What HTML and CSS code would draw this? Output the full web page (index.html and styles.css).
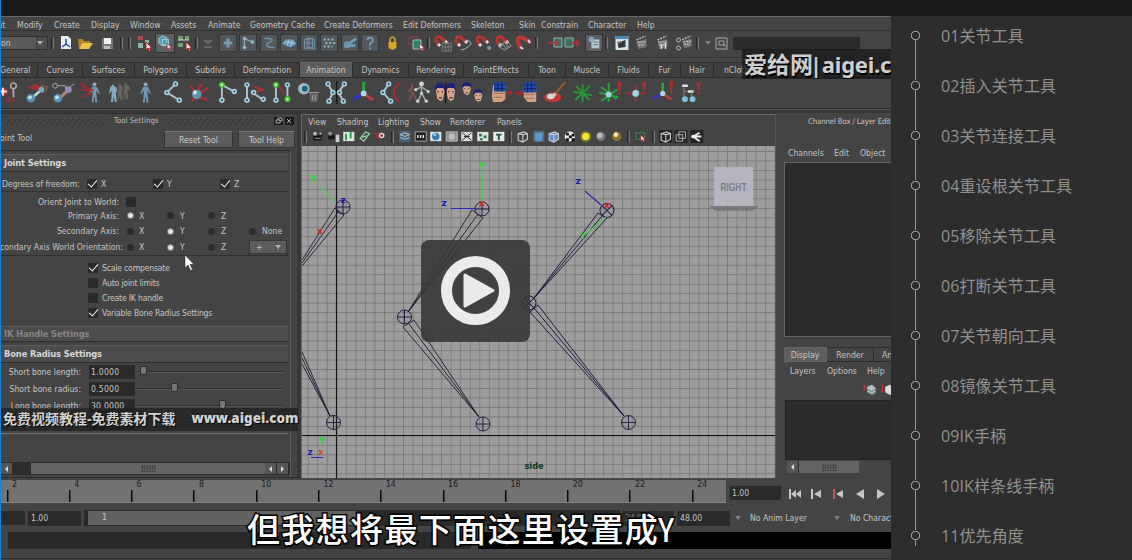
FILE: index.html
```html
<!DOCTYPE html>
<html lang="zh">
<head>
<meta charset="utf-8">
<title>关节工具</title>
<link rel="stylesheet" href="styles.css">
</head>
<body>
<svg class="defs" width="0" height="0">
<defs>
<g id="dot"><circle r="2.8" fill="#a9cfe0"/><circle r="1.1" fill="#24506a"/></g>
<g id="gdot"><circle r="3" fill="#46c832"/><circle r="1.1" fill="#eaffea"/></g>
<g id="bang"><path d="M-2 -7h4l-1 9h-2z" fill="#b32b30"/><circle cy="4.5" r="1.3" fill="#b32b30"/></g>
<symbol id="man" viewBox="0 0 24 24"><circle cx="12" cy="3.5" r="2" fill="#8db4cc"/><path d="M9.500 6h5l3 7-1 .5-2.500-4v5l1 8h-2l-1-7-1 7H9l1-8V9.500L7.500 13.500l-1-.5z" fill="#7199b3"/></symbol>
<symbol id="men" viewBox="0 0 24 24"><path d="M5 5q1-3 2 0l3 2 1 6-2-3 1 12H8L7 16l-1 6H4l1-12-3 4 1-7z" fill="#82a9c2"/><path d="M12 4q1-3 2 0l2 2 1 6-2-3 1 11h-2l-1-6-1 6h-1l1-14zM18 3q1-3 2 0l3 2 1 6-3-3 1 11h-2l-1-6-1 6h-1l1-14z" fill="#68645f"/></symbol>
<symbol id="bone" viewBox="0 0 24 24"><path d="M15 3L6 12l13 8" fill="none" stroke="#a5c3d2" stroke-width="2"/><use href="#dot" x="15" y="3"/><use href="#dot" x="6" y="12"/><use href="#dot" x="19" y="20"/></symbol>
<symbol id="joint3" viewBox="0 0 24 24"><path d="M6 20V4l13 7" fill="none" stroke="#a9c3cf" stroke-width="2"/><use href="#dot" x="6" y="20"/><use href="#gdot" x="6" y="4"/><use href="#dot" x="19" y="11"/></symbol>
<symbol id="joint4" viewBox="0 0 24 24"><path d="M4 4v16M8 11l12 8" stroke="#a9c3cf" stroke-width="2"/><path d="M12 6l8 3-6 2" stroke="#b02d2d" stroke-width="2" fill="none"/><use href="#dot" x="4" y="4"/><use href="#dot" x="4" y="20"/><use href="#dot" x="11" y="12"/><use href="#dot" x="21" y="19"/></symbol>
<symbol id="joint5" viewBox="0 0 24 24"><path d="M6 4v16M18 4v16" stroke="#a9c3cf" stroke-width="2"/><path d="M9 4l5 9" stroke="#a12d38" stroke-width="2"/><use href="#gdot" x="6" y="4"/><use href="#dot" x="6" y="20"/><use href="#dot" x="18" y="4"/><use href="#gdot" x="18" y="19"/></symbol>
<symbol id="bird" viewBox="0 0 24 24"><path d="M2 7l9-4 7 4-6 3z" fill="#a42f2f"/><path d="M16 5l7 1-2 6" stroke="#a46232" fill="none"/><path d="M7 18L17 9" stroke="#c8dbe3" stroke-width="2.500"/><circle cx="6" cy="18" r="4.500" fill="#5892b8"/><circle cx="5" cy="17" r="2" fill="#b9dbe9"/><circle cx="17" cy="9" r="3" fill="#7da6c3"/></symbol>
<symbol id="keybird" viewBox="0 0 24 24"><circle cx="3" cy="5" r="2.500" fill="none" stroke="#aaa"/><path d="M5.500 5H14v3M19 6l4-3" stroke="#aaa" fill="none"/><path d="M7 19L17 9" stroke="#b88574" stroke-width="3"/><circle cx="6" cy="18" r="4.500" fill="#5b92b7"/><circle cx="5" cy="17" r="2" fill="#c6e2ed"/><circle cx="17" cy="9" r="3.500" fill="#978bb7"/></symbol>
<symbol id="burst" viewBox="0 0 24 24"><path d="M8 13L2 5M9 12l5-9M10 14l11-7M10 16l10 4M7 16l-3 5" stroke="#af2c30" stroke-width="2.500"/><circle cx="9" cy="14" r="5" fill="#6897b5"/><circle cx="7" cy="12" r="2" fill="#c9e5f0"/></symbol>
<symbol id="manred" viewBox="0 0 24 24"><use href="#man" x="4" width="24" height="24"/><path d="M1 2l14 8M0 9l13 1M2 17l10-4M2 4l10 9" stroke="#a52c32" stroke-width="1.500"/></symbol>
<symbol id="eye" viewBox="0 0 24 24"><ellipse cx="6" cy="8" rx="6" ry="6" fill="#9db9c6"/><circle cx="7" cy="8" r="3" fill="#1d5c84"/><path d="M12 13h9l-1 9h-7z" fill="#666"/><path d="M11 12h11M15 15v5M18 15v5" stroke="#a0a0a0"/></symbol>
<symbol id="pair" viewBox="0 0 24 24"><path d="M3 3l5 9-4 9M20 3l-6 9 5 9" fill="none" stroke="#b9c8ce" stroke-width="2"/><path d="M12 0v24" stroke="#171717" stroke-width="1.500"/><use href="#dot" x="3" y="3"/><use href="#dot" x="8" y="12"/><use href="#dot" x="4" y="21"/><use href="#dot" x="20" y="3"/><use href="#dot" x="15" y="12"/><use href="#dot" x="19" y="21"/></symbol>
<symbol id="axis" viewBox="0 0 24 24"><path d="M12 13V1" stroke="#29a632" stroke-width="3"/><path d="M12 13L1 19" stroke="#2933d1" stroke-width="3"/><path d="M12 13l10 7" stroke="#c33b3d" stroke-width="3"/><circle cx="12" cy="13" r="3" fill="#b3d4e2"/></symbol>
<symbol id="bonered" viewBox="0 0 24 24"><path d="M10 3L4 12l8 9" fill="none" stroke="#a9c4ce" stroke-width="2"/><path d="M22 2Q9 11 21 22" fill="none" stroke="#aa2932" stroke-width="2"/><use href="#dot" x="10" y="3"/><use href="#dot" x="4" y="12"/><use href="#dot" x="12" y="21"/></symbol>
<symbol id="skel" viewBox="0 0 24 24"><path d="M5 3v10l-3 8M5 6l-4 6M6 12l4 9" stroke="#81504f" fill="none" stroke-width="2"/><path d="M15 4v9l-4 9M15 12l5 10M9 9l6-3 7 5" fill="none" stroke="#a5adaf" stroke-width="1.500"/><g fill="#cbd3d5"><circle cx="15" cy="3" r="2.500"/><circle cx="9" cy="9" r="1.700"/><circle cx="22" cy="11" r="1.700"/><circle cx="11" cy="21" r="1.700"/><circle cx="20" cy="21" r="1.700"/><circle cx="15" cy="13" r="1.700"/></g></symbol>
<symbol id="face" viewBox="0 0 24 24" preserveAspectRatio="none"><path d="M3 9q0-7 8-7 10-1 9 9l-3 9-5 2-6-3z" fill="#d5a68b"/><path d="M1 8q2-8 10-7 11-1 10 9l-4-3H6l-3 3z" fill="#1e2377"/><path d="M6 11h3M14 11h3M9 18h6" stroke="#5f342b" stroke-width="1.500"/></symbol>
<symbol id="faces" viewBox="0 0 24 24"><use href="#face" width="12" height="15" y="1"/><use href="#face" width="12" height="15" x="12" y="8"/></symbol>
<symbol id="twin" viewBox="0 0 24 24"><use href="#face" width="13" height="22" x="0" y="1"/><use href="#face" width="13" height="22" x="11" y="1"/><path d="M12 1v22" stroke="#221e22" stroke-width="1.500"/></symbol>
<symbol id="fist" viewBox="0 0 24 24"><path d="M4 4h13v15l-4 3H4l-1-6z" fill="#d2a084"/><path d="M5 1h12v10H5z" fill="#2349a3"/><path d="M5 4h12M5 8h12M9 1v10M13 1v10" stroke="#14255e"/><path d="M5 13h11M5 17h9" stroke="#a36d5c"/><path d="M18 12h6l-2-2m2 2l-2 2" stroke="#b4262a" fill="none" stroke-width="1.500"/></symbol>
<symbol id="fist2" viewBox="0 0 24 24"><path d="M8 8h13v14H12l-4-5z" fill="#d2a084"/><path d="M8 1h13v11H8z" fill="#2349a3"/><path d="M8 4h13M8 8h13M12 1v11M16 1v11" stroke="#14255e"/><path d="M9 14h10M10 18h9" stroke="#a36d5c"/><path d="M0 13h6l-2-2m2 2l-2 2" stroke="#b4262a" fill="none" stroke-width="1.500"/></symbol>
<symbol id="brush" viewBox="0 0 24 24"><ellipse cx="10" cy="17" rx="9" ry="5" fill="#c33a35"/><ellipse cx="8" cy="16" rx="4" ry="3" fill="#c4dce8"/><path d="M12 14l11-13" stroke="#8b5b35" stroke-width="2.500"/><path d="M9 17l4-4" stroke="#e3d0a4" stroke-width="3"/></symbol>
<symbol id="star" viewBox="0 0 24 24"><path d="M12 3v19M2 11l20 4M4 20L20 5M5 5l14 15" stroke="#26953a" stroke-width="2"/></symbol>
<symbol id="star2" viewBox="0 0 24 24"><path d="M11 2v20M1 12l20 5M3 21L20 9M3 6l16 13" stroke="#27a03a" stroke-width="2"/><circle cx="11" cy="14" r="3" fill="#9ed6dc"/><use href="#bang" x="22" y="8"/></symbol>
<symbol id="cross2" viewBox="0 0 24 24"><path d="M11 3v19M1 13h19" stroke="#96303b" stroke-width="2"/><circle cx="11" cy="13" r="3.500" fill="#a2d0e4"/><use href="#bang" x="20" y="8"/></symbol>
<symbol id="axis2" viewBox="0 0 24 24"><use href="#axis" width="22" height="24"/><use href="#bang" x="20" y="7"/></symbol>
<symbol id="tree2" viewBox="0 0 24 24"><path d="M2 5h6M8 11h6" stroke="#ddd" stroke-width="2.500"/><path d="M4 7v10M5 11h3M12 12v6" stroke="#888" fill="none"/><circle cx="5" cy="19" r="3" fill="#83bfdc"/><circle cx="13" cy="19" r="3" fill="#83bfdc"/><use href="#bang" x="19" y="8"/></symbol>
<symbol id="ikmini" viewBox="0 0 24 24"><path d="M2 11h9M6 7v9" stroke="#c42f35" stroke-width="5"/><path d="M2 11h8M6 7v8" stroke="#eee" stroke-width="2"/><circle cx="17" cy="5" r="3" fill="none" stroke="#a9a9a9" stroke-width="1.500"/><path d="M17 8v9" stroke="#a9a9a9" stroke-width="2"/><path d="M7 22l5-6 6 2 2 5z" fill="#713744"/></symbol>
<symbol id="magnet" viewBox="0 0 18 18"><path d="M6 11L3 7Q2 2 7 3l6 5" fill="none" stroke="#b9342c" stroke-width="3"/><path d="M5 10l2 2M12 7l2 2" stroke="#ddd" stroke-width="3"/></symbol>
<symbol id="clap" viewBox="0 0 18 18"><path d="M4 8l10-3v8l-8 2z" fill="#777"/><path d="M4 6l9-4M5 8h9M6 11h6" stroke="#bbb" stroke-dasharray="2 1" stroke-width="1.500"/></symbol>
<symbol id="cur" viewBox="0 0 8 10"><path d="M1 0v8l2-2 1.500 3 1.500-1-1.500-2H7z" fill="#f3dddd" stroke="#9f252d"/></symbol>
<symbol id="cube" viewBox="0 0 14 14"><path d="M2 4l6-2 4 2v6l-5 3-5-2zM2 4l5 1 5-1M7 5v8" fill="none" stroke="currentColor" stroke-width="1.200"/></symbol>
<pattern id="vgrid" x="336.300" y="435.400" width="9.530" height="9.480" patternUnits="userSpaceOnUse"><path d="M0 0H9.530M0 0V9.480" stroke="#717171" stroke-width="1.300" fill="none"/></pattern>
<g id="jc" fill="none" stroke="#251b43"><circle r="7"/><path d="M-7 0H7M0-7V7"/></g>
</defs>
</svg>

<div class="topbar"></div>
<div class="page">
<main class="video">
  <nav class="menubar"><span>it</span><span>Modify</span><span>Create</span><span>Display</span><span>Window</span><span>Assets</span><span>Animate</span><span>Geometry Cache</span><span>Create Deformers</span><span>Edit Deformers</span><span>Skeleton</span><span>Skin</span><span>Constrain</span><span>Character</span><span>Help</span></nav>

  <div class="status">
    <div class="combo"><span>on</span><i class="down"></i></div>
    <i class="sep"></i>
    <svg width="18" height="18" viewBox="0 0 18 18"><path d="M4 2h7l3 3v10H4z" fill="#e9eeee"/><path d="M9 5v5l-4 3M9 10l4 3" stroke="#2748a7" stroke-width="1.500" fill="none"/></svg>
    <svg width="20" height="18" viewBox="0 0 20 18"><path d="M3 5h5l1 2h6v2H7l-3 6z" fill="#b18222"/><path d="M7 9h11l-4 6H4z" fill="#ebc24f"/></svg>
    <svg class="save" width="18" height="18" viewBox="0 0 18 18"><path d="M4 4h11v11H4z" fill="#777"/><path d="M6 4h7v6H6z" fill="#eee"/><path d="M6 12h6v3H6z" fill="#bbb"/></svg>
    <i class="sep"></i><i class="sep"></i>
    <svg width="20" height="20" viewBox="0 0 20 20"><path d="M3 3h5v4H3z" fill="#b04450"/><path d="M3 10h5v5H3zM10 7h4v3h-4z" fill="#91b7a3"/><use href="#cur" x="10" y="9" width="8" height="10"/></svg>
    <svg class="on" width="20" height="20" viewBox="0 0 20 20"><path d="M3 5l4-3 5 2v7l-5 2-4-3zM7 6h7v7H7z" fill="#4f9cb3" stroke="#a5d3db"/><use href="#cur" x="11" y="10" width="8" height="9"/></svg>
    <svg width="20" height="20" viewBox="0 0 20 20"><path d="M3 3h5v4H3zM10 3h4v4h-4zM3 10h5v4H3z" fill="#73a46c"/><path d="M3 7h11" stroke="#d0ddd0"/><use href="#cur" x="10" y="9" width="8" height="10"/></svg>
    <i class="sep"></i>
    <svg width="20" height="18" viewBox="0 0 20 18"><path d="M6 7h8M8 9h4M6 13h8" stroke="#838383"/></svg>
    <div class="snaps">
      <svg viewBox="0 0 18 18"><path d="M9 4v10M4 9h10" stroke="#739ab1" stroke-width="3.500"/></svg>
      <svg viewBox="0 0 18 18"><path d="M5 14V4l9 4" fill="none" stroke="#8baab9" stroke-width="1.500"/><g fill="#95bace"><circle cx="5" cy="14" r="2"/><circle cx="5" cy="4" r="2"/><circle cx="14" cy="8" r="2"/></g></svg>
      <svg viewBox="0 0 18 18"><path d="M4 4h6q5 2 0 4t-3 4 8 2" fill="none" stroke="#7595a7" stroke-width="1.700"/></svg>
      <svg viewBox="0 0 18 18"><path d="M1 10l4-5 9 0 3 5-6 4z" fill="#6e9bb9"/><path d="M4 8l12 1M9 5l-2 7M13 6l-2 7" stroke="#aac7d7"/></svg>
      <svg viewBox="0 0 18 18"><path d="M4 5l9-1v10l-9 1zM7 3l8 2v10H7zM4 9h11M9 4v11" fill="none" stroke="#7498ae"/></svg>
      <svg viewBox="0 0 18 18"><path d="M3 5h12M5 9h12M3 13h10" stroke="#91bad0" stroke-width="2.200" stroke-dasharray="2.200 2.200"/></svg>
      <svg viewBox="0 0 18 18"><circle cx="6" cy="11" r="4" fill="#7094ac"/><path d="M9 9l7-5M9 12h6" stroke="#6aa1bf" stroke-width="3"/></svg>
      <svg viewBox="0 0 18 18"><path d="M6 6q0-3 3-3 4 0 3 4l-3 3v2M9 14v2" fill="none" stroke="#76a0b9" stroke-width="2"/></svg>
    </div>
    <svg class="lock" width="20" height="18" viewBox="0 0 20 18"><path d="M7 8V5q2.500-4 5 0v3" fill="none" stroke="#c6a03a" stroke-width="1.700"/><path d="M5.500 8h8v6l-4 2-4-2z" fill="#d6a72b"/></svg>
    <svg width="22" height="18" viewBox="0 0 22 18"><path d="M4 3h9v8H4z" fill="none" stroke="#a8393d"/><path d="M8 6h8v9H8z" fill="#328471" stroke="#9ec1b4"/><use href="#cur" x="13" y="9" width="8" height="9"/></svg>
    <i class="sep"></i>
    <div class="magnets">
      <svg viewBox="0 0 20 18"><use href="#magnet" width="18" height="18"/><path d="M9 9h9v8H9zM12 9v8M15 9v8M9 13h9" fill="none" stroke="#7a7c7c"/></svg>
      <svg viewBox="0 0 20 18"><use href="#magnet" width="18" height="18"/><path d="M13 6q8 2 3 6t-8 4" fill="none" stroke="#9db9c6"/></svg>
      <svg viewBox="0 0 20 18"><use href="#magnet" width="18" height="18"/><circle cx="15" cy="14" r="2" fill="#819aae"/></svg>
      <svg viewBox="0 0 20 18"><use href="#magnet" width="18" height="18"/><path d="M4 12l9-5 4 5-7 4zM8 10l5 5M11 9l4 5" fill="none" stroke="#a3a3a3"/></svg>
      <svg viewBox="0 0 20 18"><path d="M7 15L4 9Q2 2 9 4l7 4" fill="none" stroke="#b63836" stroke-width="4"/><path d="M6 13l3 2M14 6l2 3" stroke="#ddd" stroke-width="2"/></svg>
    </div>
    <i class="sep"></i>
    <svg class="io" width="18" height="18" viewBox="0 0 18 18"><path d="M7 4h8v9H7z" fill="#357367" stroke="#97b3a8"/><path d="M1 9h9M8 6l3 3-3 3" fill="none" stroke="#b53139" stroke-width="1.500"/></svg>
    <svg width="18" height="18" viewBox="0 0 18 18"><path d="M2 4h8v9H2z" fill="#357367" stroke="#97b3a8"/><path d="M7 9h9M13 6l3 3-3 3" fill="none" stroke="#b53139" stroke-width="1.500"/></svg>
    <svg class="on hist" width="18" height="18" viewBox="0 0 18 18"><path d="M6 5h9v10H6z" fill="#b8c8d2"/><circle cx="6" cy="5" r="3" fill="#85a7bf"/><path d="M8 8h6M8 11h6" stroke="#5a6970"/></svg>
    <i class="sep"></i>
    <div class="renders">
      <svg viewBox="0 0 20 18"><path d="M4 2h13v14H4z" fill="#d2e4ed"/><path d="M4 2h13v3H4z" fill="#468ab4"/><path d="M6 8l8-2v7l-7 1z" fill="#393839"/><path d="M7 9l6-3" stroke="#ccc" stroke-dasharray="1.500 1"/></svg>
      <svg viewBox="0 0 20 18"><use href="#clap" width="18" height="18"/></svg>
      <svg viewBox="0 0 20 18"><use href="#clap" width="18" height="18"/><path d="M8 10v5M12 9v6" stroke="#ddd" stroke-width="1.500"/></svg>
      <svg viewBox="0 0 20 18"><use href="#clap" x="4" width="17" height="17"/><circle cx="4" cy="6" r="2" fill="none" stroke="#bbb"/><circle cx="4" cy="14" r="2" fill="none" stroke="#bbb"/></svg>
    </div>
    <i class="sep"></i>
    <i class="down dim"></i>
    <svg class="pick" width="13" height="13" viewBox="0 0 13 13"><path d="M1 1h11v11H1zM4 4h5v4H4zM8 7l3 3" fill="none" stroke="#aaa"/></svg>
    <div class="field"></div>
  </div>

  <div class="tabs"><span>General</span><span>Curves</span><span>Surfaces</span><span>Polygons</span><span>Subdivs</span><span>Deformation</span><span class="active">Animation</span><span>Dynamics</span><span>Rendering</span><span>PaintEffects</span><span>Toon</span><span>Muscle</span><span>Fluids</span><span>Fur</span><span>Hair</span><span>nCloth</span></div>

  <div class="shelf">
    <svg><use href="#ikmini"/></svg><svg><use href="#bird"/></svg><svg><use href="#keybird"/></svg><svg><use href="#manred"/></svg><svg><use href="#men"/></svg><svg><use href="#man"/></svg><svg><use href="#bone"/></svg><svg><use href="#burst"/></svg><svg><use href="#joint3"/></svg><svg><use href="#joint4"/></svg><svg><use href="#joint5"/></svg><svg><use href="#eye"/></svg><svg><use href="#pair"/></svg><svg><use href="#axis"/></svg><svg><use href="#bonered"/></svg><svg><use href="#skel"/></svg><svg><use href="#twin"/></svg><svg><use href="#faces"/></svg><svg><use href="#fist"/></svg><svg><use href="#fist2"/></svg><svg><use href="#brush"/></svg><svg><use href="#star"/></svg><svg><use href="#star2"/></svg><svg><use href="#cross2"/></svg><svg><use href="#axis2"/></svg><svg><use href="#tree2"/></svg>
  </div>

  <div class="work">
    <section class="tool">
      <div class="ttl"><i class="hatch"></i><span>Tool Settings</span><i class="hatch"></i><svg width="20" height="10" viewBox="0 0 20 10"><path d="M0 1h9v8H0zM11 1h9v8h-9z" fill="#191919"/><path d="M2 4h4v3H2zM4 4V2h4v3H6M13 3l4 4M17 3l-4 4" fill="none" stroke="#aaa"/></svg></div>
      <div class="head"><span>oint Tool</span><button>Reset Tool</button><button>Tool Help</button></div>
      <div class="scroll">
        <h3 class="h1">Joint Settings</h3>
        <div class="dof"><label>Degrees of freedom:</label><b class="ck yes"></b><span>X</span><b class="ck yes"></b><span>Y</span><b class="ck yes"></b><span>Z</span></div>
        <div class="axes">
          <div class="ax a1"><label>Orient Joint to World:</label><b class="ck"></b></div>
          <div class="ax a2"><label>Primary Axis:</label><b class="rd yes"></b><span>X</span><b class="rd"></b><span>Y</span><b class="rd"></b><span>Z</span></div>
          <div class="ax"><label>Secondary Axis:</label><b class="rd"></b><span>X</span><b class="rd yes"></b><span>Y</span><b class="rd"></b><span>Z</span><b class="rd"></b><span>None</span></div>
          <div class="ax"><label>condary Axis World Orientation:</label><b class="rd"></b><span>X</span><b class="rd yes"></b><span>Y</span><b class="rd"></b><span>Z</span><div class="plus"><span>+</span><i class="down"></i></div></div>
        </div>
        <div class="opts">
          <div><b class="ck yes"></b><span>Scale compensate</span></div>
          <div><b class="ck"></b><span>Auto joint limits</span></div>
          <div><b class="ck"></b><span>Create IK handle</span></div>
          <div><b class="ck yes"></b><span>Variable Bone Radius Settings</span></div>
        </div>
        <h3 class="h2">IK Handle Settings</h3>
        <h3 class="h3">Bone Radius Settings</h3>
        <div class="radii">
          <div><label>Short bone length:</label><span class="num">1.0000</span><div class="track t1"><i></i></div></div>
          <div><label>Short bone radius:</label><span class="num">0.5000</span><div class="track t2"><i></i></div></div>
          <div><label>Long bone length:</label><span class="num">30.0000</span><div class="track t3"><i></i></div></div>
          <div><label>Long bone radius:</label><span class="num">2.0000</span><div class="track t4"></div></div>
        </div>
        <div class="hbar"><i class="ar l"></i><div class="gap"></div><div class="thumb"><i class="grip"></i></div><i class="ar l"></i><i class="ar r"></i></div>
      </div>
    </section>

    <section class="view">
      <div class="vmenu"><span>View</span><span>Shading</span><span>Lighting</span><span>Show</span><span>Renderer</span><span>Panels</span></div>
      <div class="vicons">
        <i class="sep"></i>
        <svg viewBox="0 0 14 14"><path d="M2 6h9v5H2zM8 3h4v4H8z" fill="#161616"/><circle cx="4" cy="4" r="2" fill="#bbb"/><circle cx="10" cy="4" r="1.500" fill="#999"/><path d="M4 9h6" stroke="#aaa"/></svg>
        <svg viewBox="0 0 14 14"><path d="M1 5h7v5H1z" fill="#161616"/><circle cx="3" cy="4" r="2" fill="#999"/><path d="M9 5h4v8H9z" fill="#ccc"/></svg>
        <svg viewBox="0 0 14 14"><path d="M1 2h12v10H1z" fill="#dbe8dc"/><path d="M4 4v7M9 2v7" stroke="#249742" stroke-width="2"/></svg>
        <svg viewBox="0 0 14 14"><path d="M2 9l6-7 4 2-6 8zM4 8l6-2" fill="none" stroke="#8fcaa0" stroke-width="1.500"/></svg>
        <svg viewBox="0 0 14 14"><path d="M1 3l6 6M4 2v8" stroke="#a92b30" stroke-width="1.500"/><circle cx="9" cy="6" r="3" fill="#ddd"/><circle cx="9" cy="6" r="1.500" fill="#833"/></svg>
        <i class="sep"></i>
        <svg viewBox="0 0 14 14"><path d="M1 1h12v12H1z" fill="#4a6277"/><path d="M2 5l5-2 5 2-5 2zM2 8l5 2 5-2" fill="none" stroke="#b9cede"/></svg>
        <svg viewBox="0 0 14 14"><path d="M1 2h12v10H1z" fill="#222" stroke="#aaa"/><path d="M3 7h9" stroke="#eee" stroke-width="3" stroke-dasharray="1.500"/></svg>
        <svg viewBox="0 0 14 14"><path d="M1 2h12v10H1z" fill="#d6e4eb"/><circle cx="7" cy="7" r="4" fill="#367bb0"/><circle cx="6" cy="5" r="1.500" fill="#acd4ef"/></svg>
        <svg viewBox="0 0 14 14"><path d="M1 2h12v10H1z" fill="#8b8c8b" stroke="#bbb"/><circle cx="7" cy="7" r="3.500" fill="#bbb"/></svg>
        <svg viewBox="0 0 14 14"><path d="M1 2h12v10H1z" fill="#ddd"/><path d="M2 3l10 8M2 11l10-8M4 7h6" stroke="#222"/></svg>
        <svg viewBox="0 0 14 14"><path d="M1 2h12v10H1z" fill="#daebdd"/><path d="M3 4h3v3H3zM8 6h3v3H8zM4 9h3v2H4z" fill="#2b6e50"/></svg>
        <svg viewBox="0 0 14 14"><path d="M1 2h12v10H1z" fill="#e4ebe5"/><path d="M4 5h6M7 4v7" stroke="#195733" stroke-width="2"/></svg>
        <i class="sep"></i>
        <svg class="lt" viewBox="0 0 14 14"><use href="#cube"/></svg>
        <svg viewBox="0 0 14 14"><path d="M1 1h12v12H1z" fill="#57687a"/><path d="M3 3h8v8l-4 1-4-1z" fill="#5a9ad4"/></svg>
        <svg class="lt" viewBox="0 0 14 14"><path d="M2 4l6-2 4 2v6l-5 3-5-2z" fill="#5a93c4"/><use href="#cube"/></svg>
        <svg viewBox="0 0 14 14"><circle cx="7" cy="7" r="5.500" fill="#eee"/><path d="M3 3h3v3H3zM9 4h3v3H9zM6 6h3v3H6zM3 9h3v3H3zM9 9h3v3H9z" fill="#111"/></svg>
        <svg viewBox="0 0 14 14"><circle cx="7" cy="7" r="6" fill="#77731f"/><circle cx="7" cy="7" r="4" fill="#efe539"/></svg>
        <svg viewBox="0 0 14 14"><circle cx="7" cy="7" r="5" fill="#777"/><circle cx="6" cy="6" r="3" fill="#bbb"/></svg>
        <svg viewBox="0 0 14 14"><circle cx="7" cy="7" r="5" fill="#8c702c"/><circle cx="6" cy="5" r="2.500" fill="#f4e6ad"/></svg>
        <i class="sep"></i>
        <svg viewBox="0 0 14 14"><path d="M2 3h9v7H2z" fill="none" stroke="#3aa855" stroke-dasharray="2 1"/><use href="#cur" x="6" y="5" width="7" height="9"/></svg>
        <i class="sep"></i>
        <svg class="lt" viewBox="0 0 14 14"><path d="M0 0h14v14H0z" fill="#262626"/><use href="#cube"/></svg>
        <svg viewBox="0 0 14 14"><path d="M0 0h14v14H0z" fill="#262626"/><path d="M2 5h7v7H2zM5 2h7v7H5z" fill="none" stroke="#bbb"/></svg>
        <svg viewBox="0 0 14 14"><path d="M0 0h14v14H0z" fill="#262626"/><path d="M3 7l7-4M3 7h9M3 7l7 5" stroke="#eee" stroke-width="2"/><circle cx="3" cy="7" r="2" fill="#eee"/></svg>
      </div>
      <svg class="canvas" width="473" height="332" viewBox="302 146 473 332">
        <rect x="302" y="146" width="473" height="332" fill="#9d9d9d"/>
        <rect x="302" y="146" width="473" height="332" fill="url(#vgrid)"/>
        <path d="M336.500 146V478M302 435.500H775" stroke="#151519" stroke-width="1.200"/>
        <g fill="none" stroke="#21192f" stroke-width=".9">
          <path d="M335 208L302 260M339 211L302 263M344 215L302 266M335 208L344 215M302 352L330 416M302 358L330 416M302 364L330 416"/>
          <path d="M472 210L408 312L483 218ZM478 214L408 312M414 320L479 417L403 327ZM409 324L479 417"/>
          <path d="M598 213L534 298L607 218ZM602 216L534 298M538 305L624 416L530 312ZM534 308L624 416" stroke="#160f33"/>
        </g>
        <use href="#jc" x="343" y="207"/><use href="#jc" x="333.500" y="422.500"/><use href="#jc" x="482" y="209"/><use href="#jc" x="404.500" y="317"/><use href="#jc" x="483" y="424"/><use href="#jc" x="628.500" y="422.500"/>
        <use href="#jc" transform="translate(607 210.500) rotate(45)"/><use href="#jc" transform="translate(529 303) rotate(45)"/>
        <g fill="none" stroke-width="1.200"><path d="M320 187L336 202M482.500 172V204M586 234L606 217" stroke="#55c75d"/><path d="M451 208.500H475M585 191L601 205M311 457.500H323" stroke="#2929b9"/></g>
        <g class="mark" text-anchor="middle">
          <g fill="#28dc32"><text x="313" y="182">Y</text><text x="482" y="169">Y</text><text x="583" y="239" opacity=".7">Y</text><text x="322" y="444">Y</text></g>
          <g fill="#1717bb"><text x="343" y="203">z</text><text x="444" y="206">z</text><text x="578" y="184">z</text><text x="310" y="455">z</text></g>
          <g fill="#d51c22"><text x="320" y="234">x</text><text x="482" y="206">x</text><text x="607" y="208">x</text><text x="321" y="455" fill="#ca5428">x</text></g>
          <text x="534" y="469" fill="#063b22" textLength="19" lengthAdjust="spacingAndGlyphs">side</text>
        </g>
        <path d="M709 206H759L752 211H715Z" fill="#62636b" opacity=".55"/>
        <rect x="714" y="167" width="39" height="39" fill="#b7b8c0" opacity=".93"/>
        <text class="right" x="733.500" y="190.500" text-anchor="middle" textLength="26" lengthAdjust="spacingAndGlyphs">RIGHT</text>
      </svg>
    </section>

    <section class="channels">
      <div class="ctitle">Channel Box / Layer Editor</div>
      <div class="cmenu"><span>Channels</span><span>Edit</span><span>Object</span></div>
      <div class="cbox"></div>
      <div class="ctabs"><span class="active">Display</span><span>Render</span><span class="an">Anim</span></div>
      <div class="lmenu"><span>Layers</span><span>Options</span><span>Help</span></div>
      <div class="licons"><svg viewBox="0 0 14 14"><path d="M1 2v6" stroke="#c22f37" stroke-width="2"/><path d="M4 4l5-2 4 3v6l-4 2-5-3z" fill="#bbc"/><path d="M4 7l5 2 4-2M4 10l5 2 4-2" stroke="#497a73" fill="none"/></svg><svg viewBox="0 0 14 14"><path d="M1 2v8" stroke="#c22f37" stroke-width="2"/><path d="M4 4l5-2 4 3v6l-4 2-5-3z" fill="#ddd"/></svg></div>
      <div class="lbox"></div>
      <div class="lbar"><i class="ar l"></i><div class="thumb"><i class="grip"></i></div></div>
    </section>
  </div>

  <div class="time">
    <div class="ruler"><span>2</span><span>4</span><span>6</span><span>8</span><span>10</span><span>12</span><span>14</span><span>16</span><span>18</span><span>20</span><span>22</span><span>24</span></div>
    <div class="now">1.00</div>
    <svg class="play" width="110" height="14" viewBox="0 0 110 14"><g fill="#c7c7c7"><path d="M3 2h2v10H3zM10 3v8L5 7zM15 3v8l-5-4zM25 2h2v10h-2zM35 3v8l-7-4zM57 3v8l-7-4zM78 2v10l-8-5zM91 2v10l8-5z"/></g><path d="M47 2h2v10h-2z" fill="#c75863"/></svg>
  </div>
  <div class="range"><div class="f0"></div><div class="f1">1.00</div><div class="bar"><div class="fill">1</div></div><div class="f2">24.00</div><div class="f3">48.00</div><i class="down dim"></i><span class="al">No Anim Layer</span><i class="down dim"></i><span class="nc">No Character Set</span></div>
  <div class="cmd"><div class="in"></div><div class="out"></div></div>

  <div class="mark1">爱给网<b>|aigei.c</b></div>
  <div class="mark2"><span>免费视频教程-免费素材下载</span><b>www.aigei.com</b></div>
  <svg class="pointer" width="10" height="18" viewBox="0 0 10 18"><path d="M1 1v13l3-3 2.500 5.500 2-1-2.500-5H10z" fill="#fff" stroke="#333" stroke-width=".6"/></svg>
  <div class="subtitle">但我想将最下面这里设置成<span>Y</span></div>
  <div class="bigplay"><svg width="109" height="102" viewBox="0 0 109 102"><circle cx="54.500" cy="50.500" r="29" fill="none" stroke="#ebebeb" stroke-width="11"/><path d="M44 35L72 50.500L44 66Z" fill="#ebebeb" stroke="#ebebeb" stroke-width="3" stroke-linejoin="round"/></svg></div>
</main>

<aside class="list">
  <a>01关节工具</a><a>02插入关节工具</a><a>03关节连接工具</a><a>04重设根关节工具</a><a>05移除关节工具</a><a>06打断关节工具</a><a>07关节朝向工具</a><a>08镜像关节工具</a><a>09IK手柄</a><a>10IK样条线手柄</a><a>11优先角度</a>
</aside>
</div>
<div class="edge"></div>
</body>
</html>
```

FILE: styles.css
```css
* { box-sizing: border-box; }
html, body { height: 560px; overflow: hidden; }
body { margin: 0; background: #2d2d2d; font-family: "DejaVu Sans Condensed", "DejaVu Sans", sans-serif; font-stretch: condensed; }
.defs { display: block; height: 0; }
.topbar { height: 16px; background: #191919; }
.page { display: flex; height: 544px; }
.edge { position: absolute; left: 0; top: 0; width: 1px; height: 560px; background: #1c82d8; }

.video { position: relative; width: 891px; height: 544px; overflow: hidden; background: #444; color: #c6c6c6; font-size: 8.6px; line-height: 12px; white-space: nowrap; }
.video svg { display: block; flex: none; }
.sep { flex: none; width: 3px; height: 12px; border-left: 1px solid #292929; border-right: 1px solid #777; }
.down { flex: none; width: 0; height: 0; border: 3px solid transparent; border-top: 4px solid #aaa; border-bottom: 0; }
.dim { border-top-color: #808080; }

.menubar { display: grid; grid-template-columns: 17px 37px 37px 39px 41px 37px 42px 74px 79px 68px 48px 22px 47px 49px 30px; height: 15px; padding-top: 2px; border-top: 1px solid #686868; border-bottom: 1px solid #313131; }

.status { display: flex; align-items: center; height: 27px; border-bottom: 1px solid #393939; padding-bottom: 2px; }
.combo { display: flex; align-items: center; justify-content: space-between; flex: none; width: 48px; height: 14px; margin-right: 3px; padding: 0 4px 0 1px; background: linear-gradient(90deg, #5b5b5b 36px, #333 36px, #4d4d4d 37px); border: 1px solid #2e2e2e; border-left: 0; }
.combo + .sep { margin-right: 3px; }
.save { margin-left: 3px; }
.save + .sep { margin: 0 5px 0 4px; }
.save + .sep + .sep { margin-right: 4px; }
.on { background: #5c6063; border: 1px solid #333; }
.snaps { display: flex; gap: 2.300px; margin: 0 2px 0 1px; }
.snaps svg { width: 18px; height: 18px; background: #51575b; border: 1px solid #363a3c; }
.lock { margin: 0 2px; }
.magnets { display: flex; margin: 0 0 0 3px; }
.magnets svg { width: 20.300px; height: 18px; }
.io { margin-left: 9px; margin-right: -2px; }
.hist { margin: 0 2px 0 4px; }
.renders { display: flex; margin: 0 1px 0 3px; }
.renders svg { width: 21px; height: 18px; }
.status .dim { margin: 0 4px 0 6px; }
.field { flex: none; width: 127px; height: 13px; margin-left: 5px; background: #2b2b2b; }

.tabs { display: grid; grid-template-columns: 38px 45px 52px 52px 48px 65px 53px 56px 55px 65px 37px 43px 40px 32px 33px 46px; height: 20px; padding-top: 4px; border-bottom: 1px solid #2b2b2b; text-align: center; overflow: hidden; }
.tabs span { height: 15px; padding-top: 1px; line-height: 13px; background: #3e3e3e; border-top: 1px solid #303030; border-right: 1px solid #2b2b2b; }
.tabs span:first-child { padding-right: 10px; }
.tabs .active { background: #5d5d5d; border-top-color: #666; }
.shelf { display: flex; height: 31px; align-items: center; margin-left: -4.700px; padding-bottom: 2px; border-bottom: 1px solid #2c2c2c; }
.shelf svg { width: 27.300px; height: 23px; padding: 0 2px; }

.work { display: grid; grid-template-columns: 301px 475px 115px; height: 369px; padding-top: 3px; background: #383838; border-top: 1px solid #555; }
.tool { width: 297px; height: 364px; background: #444; border-top: 1px solid #303030; overflow: hidden; }
.ttl { display: flex; align-items: center; gap: 8px; height: 14px; padding: 0 3px 0 5px; font-size: 7.800px; color: #bbb; }
.ttl .hatch { width: 101px; height: 7px; background: repeating-linear-gradient(135deg, #3d3d3d 0 2px, #484848 2px 4px); }
.ttl span + .hatch { flex: 1; }
.head { display: flex; align-items: flex-start; gap: 5px; height: 22px; padding: 3px 2px 0 0; }
.head span { flex: 1; padding-top: 1px; }
.head button { height: 17px; width: 69px; padding: 0; border: 1px solid #363636; border-top-color: #777; background: #5c5c5c; color: #c8c8c8; font: inherit; }
.head button + button { width: 57px; }
.scroll { width: 291px; height: 328px; border-top: 1px solid #2c2c2c; border-right: 1px solid #606060; overflow: hidden; }
.scroll h3 { margin: 0 2px 0 0; padding-left: 4px; font: bold 9.300px/15px "DejaVu Sans Condensed", "DejaVu Sans", sans-serif; font-stretch: condensed; letter-spacing: -.15px; color: #d6d6d6; background: #4c4c4c; border-top: 1px solid #5c5c5c; border-bottom: 1px solid #2d2d2d; }
.scroll .h1 { height: 18px; margin-top: 3px; }
.ck { display: block; flex: none; width: 10px; height: 10px; background: #2a2a2a; position: relative; }
.ck.yes::after { content: ""; position: absolute; left: 3px; top: -1px; width: 4px; height: 8px; border: solid #f2f2f2; border-width: 0 1.700px 1.700px 0; transform: rotate(40deg); }
.rd { display: block; width: 7px; height: 7px; border-radius: 50%; background: #2b2b2b; }
.rd.yes { background: #e5e5e5; border: 1px solid #777; }
.dof { display: grid; align-items: center; grid-template-columns: 87px 14px 52px 14px 53px 14px 30px; height: 20px; border-bottom: 1px solid #303030; margin-right: 2px; padding-top: 4px; }
.dof label { padding-left: 2px; letter-spacing: -.1px; }
.axes { height: 64px; margin-right: 2px; padding-top: 3px; border-bottom: 1px solid #303030; }
.ax { display: grid; grid-template-columns: 119px 8px 12px 29px 12px 29px 12px 29px 12px 30px; align-items: center; height: 16px; }
.ax > label { grid-column: 1; text-align: right; }
.ax .rd { margin-left: 8px; }
.ax .ck { margin-left: 7px; }
.ax > span { grid-row: 1; }
.ax > :nth-child(2) { grid-column: 2; }
.ax > :nth-child(3) { grid-column: 3 / span 2; margin-left: 12px; }
.ax > :nth-child(4) { grid-column: 5; margin-left: -1px; }
.ax > :nth-child(5) { grid-column: 6; }
.ax > :nth-child(6) { grid-column: 7; margin-left: -1px; }
.ax > :nth-child(7) { grid-column: 8; }
.ax > :nth-child(8) { grid-column: 9; margin-left: -1px; }
.ax > :nth-child(9) { grid-column: 10; }
.a1 { height: 13px; }
.a2 { height: 15px; }
.ax > .plus { grid-column: 9 / span 2; display: flex; align-items: center; justify-content: space-between; width: 38px; height: 14px; padding: 0 5px 0 6px; background: linear-gradient(90deg, #5c5c5c 25px, #383838 25px, #5c5c5c 26px); border: 1px solid #373737; }
.opts { height: 69px; padding-top: 4px; letter-spacing: -.2px; }
.opts div { display: flex; align-items: center; gap: 4px; height: 15px; padding-left: 88px; }
.scroll .h2 { height: 16px; margin-top: 1px; color: #858585; line-height: 14px; }
.scroll .h3 { height: 18px; margin-top: 3px; }
.radii { height: 71px; margin-right: 2px; border-bottom: 1px solid #747474; }
.radii > div { display: grid; grid-template-columns: 81px 8px 46px 2px 146px; align-items: center; height: 17px; padding-top: 1px; }
.radii label { grid-column: 1; text-align: right; }
.num { grid-column: 3; height: 14px; padding: 1px 2px; background: #2a2a2a; letter-spacing: .2px; }
.track { grid-column: 5; height: 2px; background: #303030; border-bottom: 1px solid #555; }
.track i { display: block; width: 7px; height: 9px; margin-top: -5px; background: #777; border: 1px solid #2e2e2e; border-radius: 1px 1px 3px 3px; }
.t1 i { margin-left: 3px; } .t2 i { margin-left: 34px; } .t3 i { margin-left: 82px; }
.hbar { display: flex; height: 13px; margin-top: 28px; background: #3a3a3a; border: 1px solid #2c2c2c; }
.gap { width: 18px; background: #2c2c2c; }
.thumb { display: flex; align-items: center; justify-content: center; flex: 1; background: #646464; }
.grip { width: 15px; height: 7px; background: radial-gradient(circle, #343434 .7px, transparent 1px) 0 0 / 2.500px 2.500px; }
.ar { flex: none; width: 12px; display: flex; align-items: center; justify-content: center; background: #555; border-right: 1px solid #292929; }
.ar::after { content: ""; border: 3px solid transparent; border-right-color: #ddd; margin-left: -3px; }
.ar.r::after { border-color: transparent transparent transparent #ddd; margin-left: 3px; }

.view { border: 1px solid #686868; border-bottom: 0; border-right-color: #555; background: #444; overflow: hidden; height: 364px; margin-top: 1px; }
.vmenu { display: grid; grid-template-columns: 29px 41px 42px 30px 47px 40px; height: 15px; padding: 1px 0 0 6px; }
.vicons { display: flex; align-items: center; height: 16px; padding: 0 0 3px 2px; }
.vicons svg { width: 15.600px; height: 13px; padding: 0 .8px; }
.vicons .sep { margin: 0 3px; }
.vicons .sep:first-child { margin-left: 0; }
.lt { color: #ccc; }
.canvas { height: 332px; }
.mark { font: bold 9px "DejaVu Sans", sans-serif; }
.right { font: bold 10px "Liberation Sans", sans-serif; fill: #7b7c83; }

.channels { height: 365px; padding-left: 8px; background: #444; overflow: hidden; }
.ctitle { height: 34px; padding: 3px 0 0 24px; font-size: 7.800px; letter-spacing: -.15px; }
.cmenu { display: grid; grid-template-columns: 46px 26px 40px; height: 15px; padding-left: 4px; }
.cbox { height: 175px; background: #2b2b2b; border: 1px solid #666; border-width: 1px 0 1px 1px; }
.ctabs { display: grid; grid-template-columns: 43px 47px 30px; height: 16px; margin-top: 10px; text-align: center; }
.ctabs span { border: 1px solid #2c2c2c; border-left: 0; padding-top: 1px; height: 15px; }
.ctabs .active { background: #5e5e5e; border-color: #666; }
.ctabs .an { text-align: left; padding-left: 8px; }
.lmenu { display: grid; grid-template-columns: 37px 40px 30px; height: 19px; padding: 2px 0 0 6px; }
.licons { display: flex; gap: 4px; padding: 0 0 3px 79px; height: 18px; align-items: center; }
.licons svg { width: 14px; height: 13px; }
.lbox { height: 60px; margin-left: 1px; background: #2b2b2b; border: 1px solid #222; border-right: 0; }
.lbar { display: flex; height: 12px; margin: 1px 0 0 3px; }
.lbar .thumb { flex: none; width: 60px; }

.time { display: flex; align-items: center; height: 27px; margin-top: -1px; border-top: 1px solid #2d2d2d; }
.ruler { display: flex; flex: none; width: 726px; height: 23px; padding-left: 6.500px; background: #727272; overflow: hidden; color: #1b1b1b; border-bottom: 1px solid #858585; }
.ruler span { flex: none; width: 62.300px; padding-left: 5.500px; line-height: 9px; font-size: 8.800px; background: linear-gradient(#080808, #080808) 0 10px / 1.500px 12px no-repeat; }
.now { flex: none; width: 51px; height: 14px; margin: 4px 0 0 4px; padding: 1px 2px; background: #2b2b2b; }
.time .play { margin: 5px 0 0 5px; }
.range { display: flex; align-items: center; height: 20px; margin-top: 4px; }
.range > * { flex: none; }
.f0 { width: 25px; height: 14px; background: #2a2a2a; }
.f1, .f2, .f3 { width: 53px; height: 15px; margin-left: 3px; padding: 1px 3px; background: #2b2b2b; }
.bar { width: 536px; height: 16px; margin-left: 3px; background: #292929; padding: 1px 0 0 4px; }
.fill { width: 268px; height: 14px; padding-left: 14px; background: #626262; }
.f2 { margin-left: 2px; width: 52px; color: #777; }
.range .dim { margin-left: 5px; }
.al { width: 79px; margin-left: 9px; }
.nc { margin-left: 10px; }
.cmd { display: grid; grid-template-columns: 463px 1fr; height: 30px; margin-top: 1px; padding: 3px 0 9px 8px; border-bottom: 1px solid #2b2b2b; }
.in { background: #292929; }
.out { background: #000; margin-left: 7px; }

.mark1 { position: absolute; left: 742px; top: 33px; width: 149px; height: 30px; padding-left: 2px; overflow: hidden; background: rgba(25,25,25,.78); color: #cecece; font: bold 23px/29px "Noto Sans CJK SC", sans-serif; text-shadow: 1px 2px 1px #000; }
.mark1 b { margin-left: -3px; font: bold 22px/29px "Noto Sans", sans-serif; letter-spacing: -.25px; }
.mark2 { position: absolute; left: 0; top: 392px; display: flex; gap: 16px; width: 298px; height: 23px; padding-left: 3px; background: rgba(30,30,30,.72); color: #d1d1d1; font: bold 14px/21px "Noto Sans", "Noto Sans CJK SC", sans-serif; text-shadow: 1px 1px 1px #000; }
.mark2 b { font-size: 13.400px; }
.pointer { position: absolute; left: 184px; top: 238px; }
.subtitle { position: absolute; left: 247px; top: 489px; display: flex; color: #fff; font: 500 33px/46px "Noto Sans CJK SC", sans-serif; letter-spacing: 1.350px; -webkit-text-stroke: 3px #000; paint-order: stroke fill; }
.subtitle span { margin-left: -1px; transform: scaleX(.88); transform-origin: 0 0; }
.bigplay { position: absolute; left: 421px; top: 224px; width: 109px; height: 102px; border-radius: 8px; background: rgba(54,54,54,.88); }

.list { flex: 1; display: flex; flex-direction: column; padding: 14px 0 0 19px; background: #2d2d2d; }
.list a { flex: none; height: 50px; padding-left: 31px; color: #919191; font: 16px/13px "Open Sans", "Noto Sans CJK SC", sans-serif; letter-spacing: .1px; background: radial-gradient(circle at 5.500px 5.500px, #2d2d2d 3.400px, #999 3.900px, #999 4.500px, transparent 5px) 0 0 / 11px 11px no-repeat, linear-gradient(#999, #999) 5px 10px / 1px 40px no-repeat; }
.list a:last-child { height: 30px; background-size: 11px 11px, 1px 6px; }
```
